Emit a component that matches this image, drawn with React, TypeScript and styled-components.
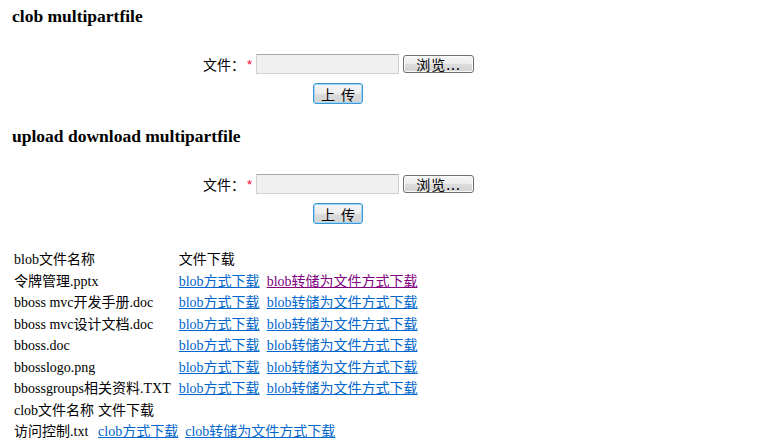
import * as React from 'react';
import styled, { createGlobalStyle } from 'styled-components';

const GlobalStyle = createGlobalStyle`
  html, body {
    margin: 0;
    padding: 0;
    background: #ffffff;
  }

  body {
    font-family: "Liberation Serif", "Noto Sans CJK SC", serif;
    font-size: 14px;
    color: #000000;
  }
`;

const Page = styled.div`
  width: 775px;
  height: 447px;
  overflow: hidden;
  padding: 6px 0 0 12px;
  box-sizing: border-box;
`;

const Title = styled.h3<{ gap: number }>`
  margin: 0 0 ${({ gap }) => gap}px;
  font-family: "Liberation Serif", serif;
  font-size: 17.5px;
  line-height: 20px;
  font-weight: bold;
`;

const UploadForm = styled.form<{ gap: number }>`
  width: 652px;
  display: flex;
  flex-direction: column;
  align-items: center;
  gap: 9px;
  margin-bottom: ${({ gap }) => gap}px;
`;

const FieldRow = styled.div`
  display: flex;
  align-items: center;
  height: 20px;
  padding-left: 1px;
`;

const Label = styled.span`
  font-family: "Noto Sans CJK SC", sans-serif;
  font-size: 14px;
  line-height: 20px;
`;

const Required = styled.span`
  color: #ff0033;
  font-family: "Liberation Sans", sans-serif;
  font-size: 13px;
  margin: 0 4px 0 2px;
`;

const PathInput = styled.input`
  width: 143px;
  height: 20px;
  box-sizing: border-box;
  background: #f0f0f0;
  border: 1px solid #d0d0d0;
  border-top-color: #a8a8a8;
  padding: 0 2px;
  margin: 0 4px 0 0;
`;

const GrayButton = styled.button<{ focused?: boolean }>`
  box-sizing: border-box;
  font-family: "Noto Sans CJK SC", sans-serif;
  font-size: 14px;
  line-height: 1;
  color: #000;
  padding: 0;
  border-radius: 3px;
  border: 1px solid ${({ focused }) => (focused ? '#3a9bd6' : '#707070')};
  box-shadow: ${({ focused }) => (focused ? 'inset 0 0 0 1px #9fd3f2' : 'inset 0 0 0 1px #fbfbfb')};
  background: linear-gradient(#f6f6f6 0%, #ececec 50%, #dcdcdc 51%, #d4d4d4 100%);
  cursor: default;
`;

const BrowseButton = styled(GrayButton)`
  width: 71px;
  height: 18px;
  letter-spacing: 1px;
`;

const SubmitButton = styled(GrayButton)`
  width: 50px;
  height: 21px;
  letter-spacing: 6px;
  padding-left: 6px;
`;

const FileTable = styled.table<{ nameGap?: number; offset?: number }>`
  border-collapse: separate;
  border-spacing: 2px;
  margin: ${({ offset }) => offset || 0}px 0 0 -1px;
  font-size: 14px;

  td {
    padding: 1px;
    line-height: 17.5px;
    white-space: nowrap;
    vertical-align: middle;
  }

  td:first-child {
    padding-right: ${({ nameGap }) => nameGap || 1}px;
  }
`;

const LinkCell = styled.td`
  display: flex;
  gap: 7px;
`;

const DownloadLink = styled.a<{ visited?: boolean }>`
  color: ${({ visited }) => (visited ? '#800080' : '#0066cc')};
  text-decoration: underline;
`;

function FileForm({ gap }: { gap: number }) {
  return (
    <UploadForm gap={gap} onSubmit={e => e.preventDefault()}>
      <FieldRow>
        <Label>文件：</Label>
        <Required>*</Required>
        <PathInput type="text" readOnly />
        <BrowseButton type="button">浏览...</BrowseButton>
      </FieldRow>
      <SubmitButton type="submit" focused>
        上传
      </SubmitButton>
    </UploadForm>
  );
}

const blobFiles = [
  { name: '令牌管理.pptx', visited: true },
  { name: 'bboss mvc开发手册.doc' },
  { name: 'bboss mvc设计文档.doc' },
  { name: 'bboss.doc' },
  { name: 'bbosslogo.png' },
  { name: 'bbossgroups相关资料.TXT' },
];

export default function App() {
  return (
    <Page>
      <GlobalStyle />
      <Title gap={28}>clob multipartfile</Title>
      <FileForm gap={22} />
      <Title gap={28}>upload download multipartfile</Title>
      <FileForm gap={24} />
      <FileTable nameGap={5}>
        <tbody>
          <tr>
            <td>blob文件名称</td>
            <td>文件下载</td>
          </tr>
          {blobFiles.map(f => (
            <tr key={f.name}>
              <td>{f.name}</td>
              <LinkCell>
                <DownloadLink href="#">blob方式下载</DownloadLink>
                <DownloadLink href="#" visited={f.visited}>
                  blob转储为文件方式下载
                </DownloadLink>
              </LinkCell>
            </tr>
          ))}
        </tbody>
      </FileTable>
      <FileTable offset={-2}>
        <tbody>
          <tr>
            <td>clob文件名称</td>
            <td>文件下载</td>
          </tr>
          <tr>
            <td>访问控制.txt</td>
            <LinkCell>
              <DownloadLink href="#">clob方式下载</DownloadLink>
              <DownloadLink href="#">clob转储为文件方式下载</DownloadLink>
            </LinkCell>
          </tr>
        </tbody>
      </FileTable>
    </Page>
  );
}
